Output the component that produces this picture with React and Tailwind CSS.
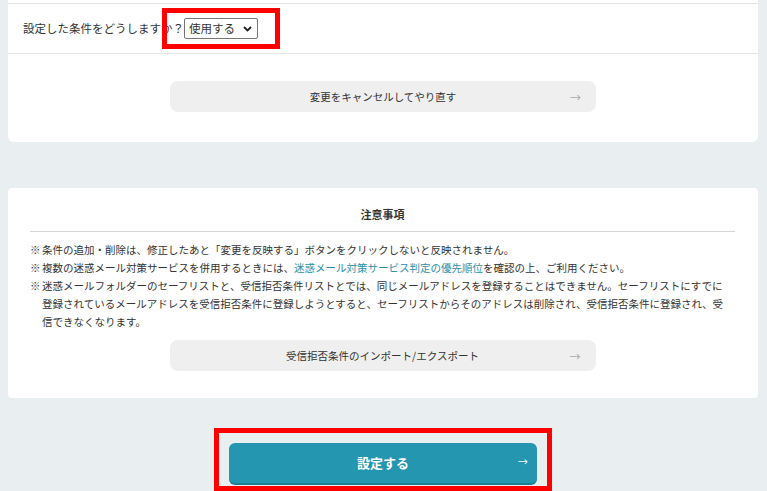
import React from "react";

const GrayButton = ({ label }) => (
    <button className="relative w-[426px] h-[31px] mx-auto flex items-center justify-center rounded-lg bg-[#efefef] text-[10.5px] text-[#333]">
        {label}
        <span className="absolute right-[15px] top-1/2 -translate-y-1/2 text-[11px] text-[#aaa]">→</span>
    </button>
);

const Mark = () => <span className="inline-block w-[12px] indent-0">※</span>;

const App = () => {
    return (
        <div className="min-h-[491px] bg-[#e9eef1] pl-2 pr-[9px] font-['Noto_Sans_CJK_JP',sans-serif] text-[#333]">
            <div className="bg-white rounded-b-md">
                <div className="h-[4px] border-b border-[#e4e4e4]"></div>
                <div className="relative h-[50px] flex items-center pl-[15px] border-b border-[#e4e4e4]">
                    <span className="text-[11.5px] leading-none">設定した条件をどうしますか？</span>
                    <div className="w-[74px] h-[21px] flex items-center justify-between pl-[4px] pr-[5px] border border-[#767676] rounded-[2px] bg-white text-[11.5px] leading-none">
                        <span>使用する</span>
                        <svg width="9" height="6" viewBox="0 0 9 6" fill="none">
                            <path d="M1 1l3.5 3.5L8 1" stroke="#222" strokeWidth="1.8" />
                        </svg>
                    </div>
                    <div className="absolute left-[154px] top-[4px] w-[118px] h-[41px] border-[5px] border-[#ff0000]"></div>
                </div>
                <div className="pt-[27px] pb-[30px]">
                    <GrayButton label="変更をキャンセルしてやり直す" />
                </div>
            </div>

            <div className="mt-[46px] bg-white rounded-sm pl-[22px] pr-[23px] pt-[17px] pb-[27px]">
                <h2 className="text-center text-[11px] font-bold leading-[18px] pb-[8px] border-b border-[#d6d6d6]">注意事項</h2>
                <ul className="mt-[9px] text-[10.5px] leading-[18px]">
                    <li className="pl-[12px] -indent-[12px]">
                        <Mark />条件の追加・削除は、修正したあと「変更を反映する」ボタンをクリックしないと反映されません。
                    </li>
                    <li className="pl-[12px] -indent-[12px]">
                        <Mark />複数の迷惑メール対策サービスを併用するときには、<span className="text-[#2b8fa9]">迷惑メール対策サービス判定の優先順位</span>を確認の上、ご利用ください。
                    </li>
                    <li className="pl-[12px] -indent-[12px]">
                        <Mark />迷惑メールフォルダーのセーフリストと、受信拒否条件リストとでは、同じメールアドレスを登録することはできません。セーフリストにすでに<br />
                        登録されているメールアドレスを受信拒否条件に登録しようとすると、セーフリストからそのアドレスは削除され、受信拒否条件に登録され、受<br />
                        信できなくなります。
                    </li>
                </ul>
                <div className="mt-[9px]">
                    <GrayButton label="受信拒否条件のインポート/エクスポート" />
                </div>
            </div>

            <div className="mt-[30px] flex justify-center">
                <div className="border-[5px] border-[#ff0000] px-[10px] pt-[10px] pb-px">
                    <button className="relative w-[308px] h-[42px] flex items-center justify-center rounded-md bg-[#2596b0] border-b-2 border-[#1d7d93] text-white text-[13px] font-bold">
                        設定する
                        <span className="absolute right-[9px] top-1/2 -translate-y-[60%] text-[10px] font-normal">→</span>
                    </button>
                </div>
            </div>
        </div>
    );
};

export default App;
